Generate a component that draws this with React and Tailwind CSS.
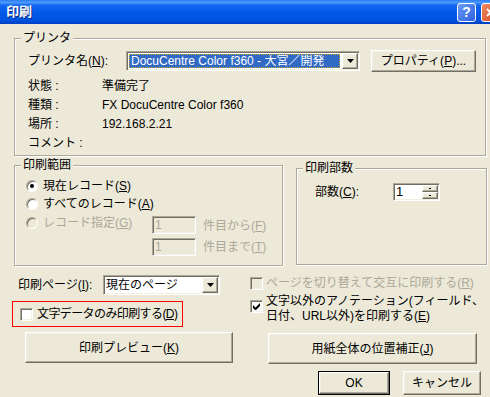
import React from "react";

const sunken =
  "border border-t-[#aca899] border-l-[#aca899] border-b-white border-r-white shadow-[inset_1px_1px_0_#716f64,inset_-1px_-1px_0_#f1efe2]";
const raised =
  "border border-t-white border-l-white border-b-[#716f64] border-r-[#716f64] shadow-[inset_-1px_-1px_0_#aca899,inset_1px_1px_0_#f1efe2] bg-[#ece9d8]";

const U = ({ children }) => <span className="underline underline-offset-1">{children}</span>;

const GroupBox = ({ label, className, children }) => (
  <div className={`relative border border-[#aca899] shadow-[inset_1px_1px_0_#fff,1px_1px_0_#fff] ${className}`}>
    <span className="absolute -top-[8px] left-[6px] bg-[#ece9d8] px-[2px] leading-[14px]">{label}</span>
    {children}
  </div>
);

const Arrow = ({ className = "" }) => (
  <svg width="7" height="4" viewBox="0 0 7 4" className={className}>
    <path d="M0 0h7L3.5 4z" fill="#000" />
  </svg>
);

const Combo = ({ className, children }) => (
  <div className={`flex items-center bg-white ${sunken} ${className}`}>
    <div className="flex-1 h-full flex items-center px-[2px] min-w-0">{children}</div>
    <div className={`w-[16px] h-[16px] mr-[1px] flex items-center justify-center ${raised}`}>
      <Arrow />
    </div>
  </div>
);

const Button = ({ className, children, def }) => (
  <div className={`${def ? "border border-black" : ""} ${className}`}>
    <div className={`w-full h-full flex items-center justify-center ${raised}`}>{children}</div>
  </div>
);

const Radio = ({ checked, disabled }) => (
  <div
    className={`w-[12px] h-[12px] rounded-full flex items-center justify-center border border-t-[#aca899] border-l-[#aca899] border-b-white border-r-white shadow-[inset_1px_1px_0_#716f64] ${
      disabled ? "bg-[#ece9d8]" : "bg-white"
    }`}
  >
    {checked && <div className="w-[4px] h-[4px] rounded-full bg-black" />}
  </div>
);

const Check = ({ checked, disabled }) => (
  <div className={`w-[13px] h-[13px] shrink-0 flex items-center justify-center ${sunken} ${disabled ? "bg-[#ece9d8]" : "bg-white"}`}>
    {checked && (
      <svg width="7" height="7" viewBox="0 0 7 7">
        <path d="M0 2v3l2 2h1l4-4V0L2.5 4.5z" fill="#000" />
      </svg>
    )}
  </div>
);

export default function App() {
  return (
    <div
      className="w-[490px] h-[397px] overflow-hidden bg-[#ece9d8] text-black text-[12px] leading-[14px]"
      style={{ fontFamily: '"Liberation Sans", "Noto Sans CJK JP", sans-serif' }}
    >
      {/* title bar */}
      <div className="h-[24px] flex items-center justify-between bg-[linear-gradient(to_bottom,#2a7af0_0%,#4c9bff_10%,#1466f0_22%,#0058e8_55%,#0052e0_85%,#003dc2_100%)]">
        <span className="ml-[6px] text-white font-bold text-[13px] [text-shadow:1px_1px_0_#0a2a8a]">印刷</span>
        <div className="flex items-center gap-[5px] -mr-[10px]">
          <div className="w-[19px] h-[19px] rounded-[3px] border border-white bg-[linear-gradient(135deg,#6c9cf4,#2a5fe0)] flex items-center justify-center text-white font-bold text-[14px]">
            ?
          </div>
          <div className="w-[19px] h-[19px] rounded-[3px] border border-white bg-[linear-gradient(135deg,#f08a60,#d84820)] flex items-center justify-center">
            <svg width="9" height="9" viewBox="0 0 9 9">
              <path d="M1 1l7 7M8 1L1 8" stroke="#fff" strokeWidth="2" />
            </svg>
          </div>
        </div>
      </div>

      <div className="pt-[14px]">
        {/* printer */}
        <GroupBox label="プリンタ" className="ml-[14px] w-[472px] h-[118px]">
          <div className="pl-[13px] pt-[11px]">
            <div className="flex items-center h-[21px]">
              <span className="w-[98px]">
                プリンタ名(<U>N</U>):
              </span>
              <Combo className="w-[234px] h-[20px]">
                <span className="flex items-center h-[14px] w-full px-[1px] bg-[#316ac5] text-white border border-dotted border-[#d0a820] whitespace-nowrap overflow-hidden">
                  DocuCentre Color f360 - 大宮／開発
                </span>
              </Combo>
              <Button className="ml-[11px] w-[105px] h-[22px]">
                プロパティ(<U>P</U>)...
              </Button>
            </div>
            <div className="mt-[5px]">
              {[
                ["状態 :", "準備完了"],
                ["種類 :", "FX DocuCentre Color f360"],
                ["場所 :", "192.168.2.21"],
                ["コメント :", ""],
              ].map(([k, v]) => (
                <div key={k} className="flex items-center h-[19px]">
                  <span className="w-[74px]">{k}</span>
                  <span>{v}</span>
                </div>
              ))}
            </div>
          </div>
        </GroupBox>

        <div className="flex items-start mt-[9px] ml-[14px]">
          {/* range */}
          <GroupBox label="印刷範囲" className="w-[269px] h-[101px]">
            <div className="pl-[11px] pt-[11px]">
              <div className="flex items-center h-[18px] gap-[5px]">
                <Radio checked />
                <span>
                  現在レコード(<U>S</U>)
                </span>
              </div>
              <div className="flex items-center h-[18px] gap-[5px]">
                <Radio />
                <span>
                  すべてのレコード(<U>A</U>)
                </span>
              </div>
              <div className="flex items-center h-[20px] text-[#aca899]">
                <div className="flex items-center gap-[5px] w-[126px]">
                  <Radio disabled />
                  <span>
                    レコード指定(<U>G</U>)
                  </span>
                </div>
                <div className={`w-[44px] h-[18px] px-[2px] flex items-center mt-[4px] ${sunken}`}>1</div>
                <span className="ml-[7px] mt-[6px]">
                  件目から(<U>F</U>)
                </span>
              </div>
              <div className="flex items-center h-[18px] mt-[5px] ml-[126px] text-[#aca899]">
                <div className={`w-[44px] h-[18px] px-[2px] flex items-center ${sunken}`}>1</div>
                <span className="ml-[7px]">
                  件目まで(<U>T</U>)
                </span>
              </div>
            </div>
          </GroupBox>

          {/* copies */}
          <GroupBox label="印刷部数" className="ml-[13px] mt-[3px] w-[191px] h-[97px]">
            <div className="pl-[18px] pt-[14px] flex items-center">
              <span className="w-[78px]">
                部数(<U>C</U>):
              </span>
              <div className={`w-[47px] h-[18px] flex items-center bg-white ${sunken}`}>
                <span className="flex-1 pl-[2px] text-[13px]">1</span>
                <div className="flex flex-col w-[16px] h-[14px] mr-[1px]">
                  <div className={`h-[7px] flex items-center justify-center ${raised}`}>
                    <div className="w-[2px] h-[1px] bg-black" />
                  </div>
                  <div className={`h-[7px] flex items-center justify-center ${raised}`}>
                    <div className="w-[2px] h-[1px] bg-black" />
                  </div>
                </div>
              </div>
            </div>
          </GroupBox>
        </div>

        {/* lower area */}
        <div className="flex mt-[9px]">
          <div className="ml-[12px] w-[221px]">
            <div className="flex items-center h-[20px] pl-[6px]">
              <span className="w-[85px]">
                印刷ページ(<U>I</U>):
              </span>
              <Combo className="w-[117px] h-[20px]">
                <span>現在のページ</span>
              </Combo>
            </div>
            <div className="mt-[6px] w-[171px] h-[26px] border border-[#ff0000] flex items-center pl-[7px] gap-[4px]">
              <Check />
              <span className="whitespace-nowrap tracking-[-0.6px]">
                文字データのみ印刷する(<U>D</U>)
              </span>
            </div>
            <Button className="mt-[5px] ml-[13px] w-[208px] h-[31px]">
              印刷プレビュー(<U>K</U>)
            </Button>
          </div>

          <div className="ml-[17px] w-[236px]">
            <div className="flex items-center h-[14px] mt-[1px] gap-[3px] text-[#aca899]">
              <Check disabled />
              <span className="whitespace-nowrap">
                ページを切り替えて交互に印刷する(<U>R</U>)
              </span>
            </div>
            <div className="flex items-start mt-[4px] gap-[3px]">
              <div className="mt-[6px]">
                <Check checked />
              </div>
              <span className="leading-[15px] whitespace-nowrap">
                文字以外のアノテーション(フィールド、
                <br />
                日付、URL以外)を印刷する(<U>E</U>)
              </span>
            </div>
            <Button className="mt-[9px] ml-[18px] w-[209px] h-[31px]">
              用紙全体の位置補正(<U>J</U>)
            </Button>
          </div>
        </div>

        <div className="flex justify-end gap-[13px] mt-[7px] mr-[9px]">
          <Button def className="w-[72px] h-[24px]">
            OK
          </Button>
          <Button className="w-[78px] h-[24px]">キャンセル</Button>
        </div>
      </div>
    </div>
  );
}
